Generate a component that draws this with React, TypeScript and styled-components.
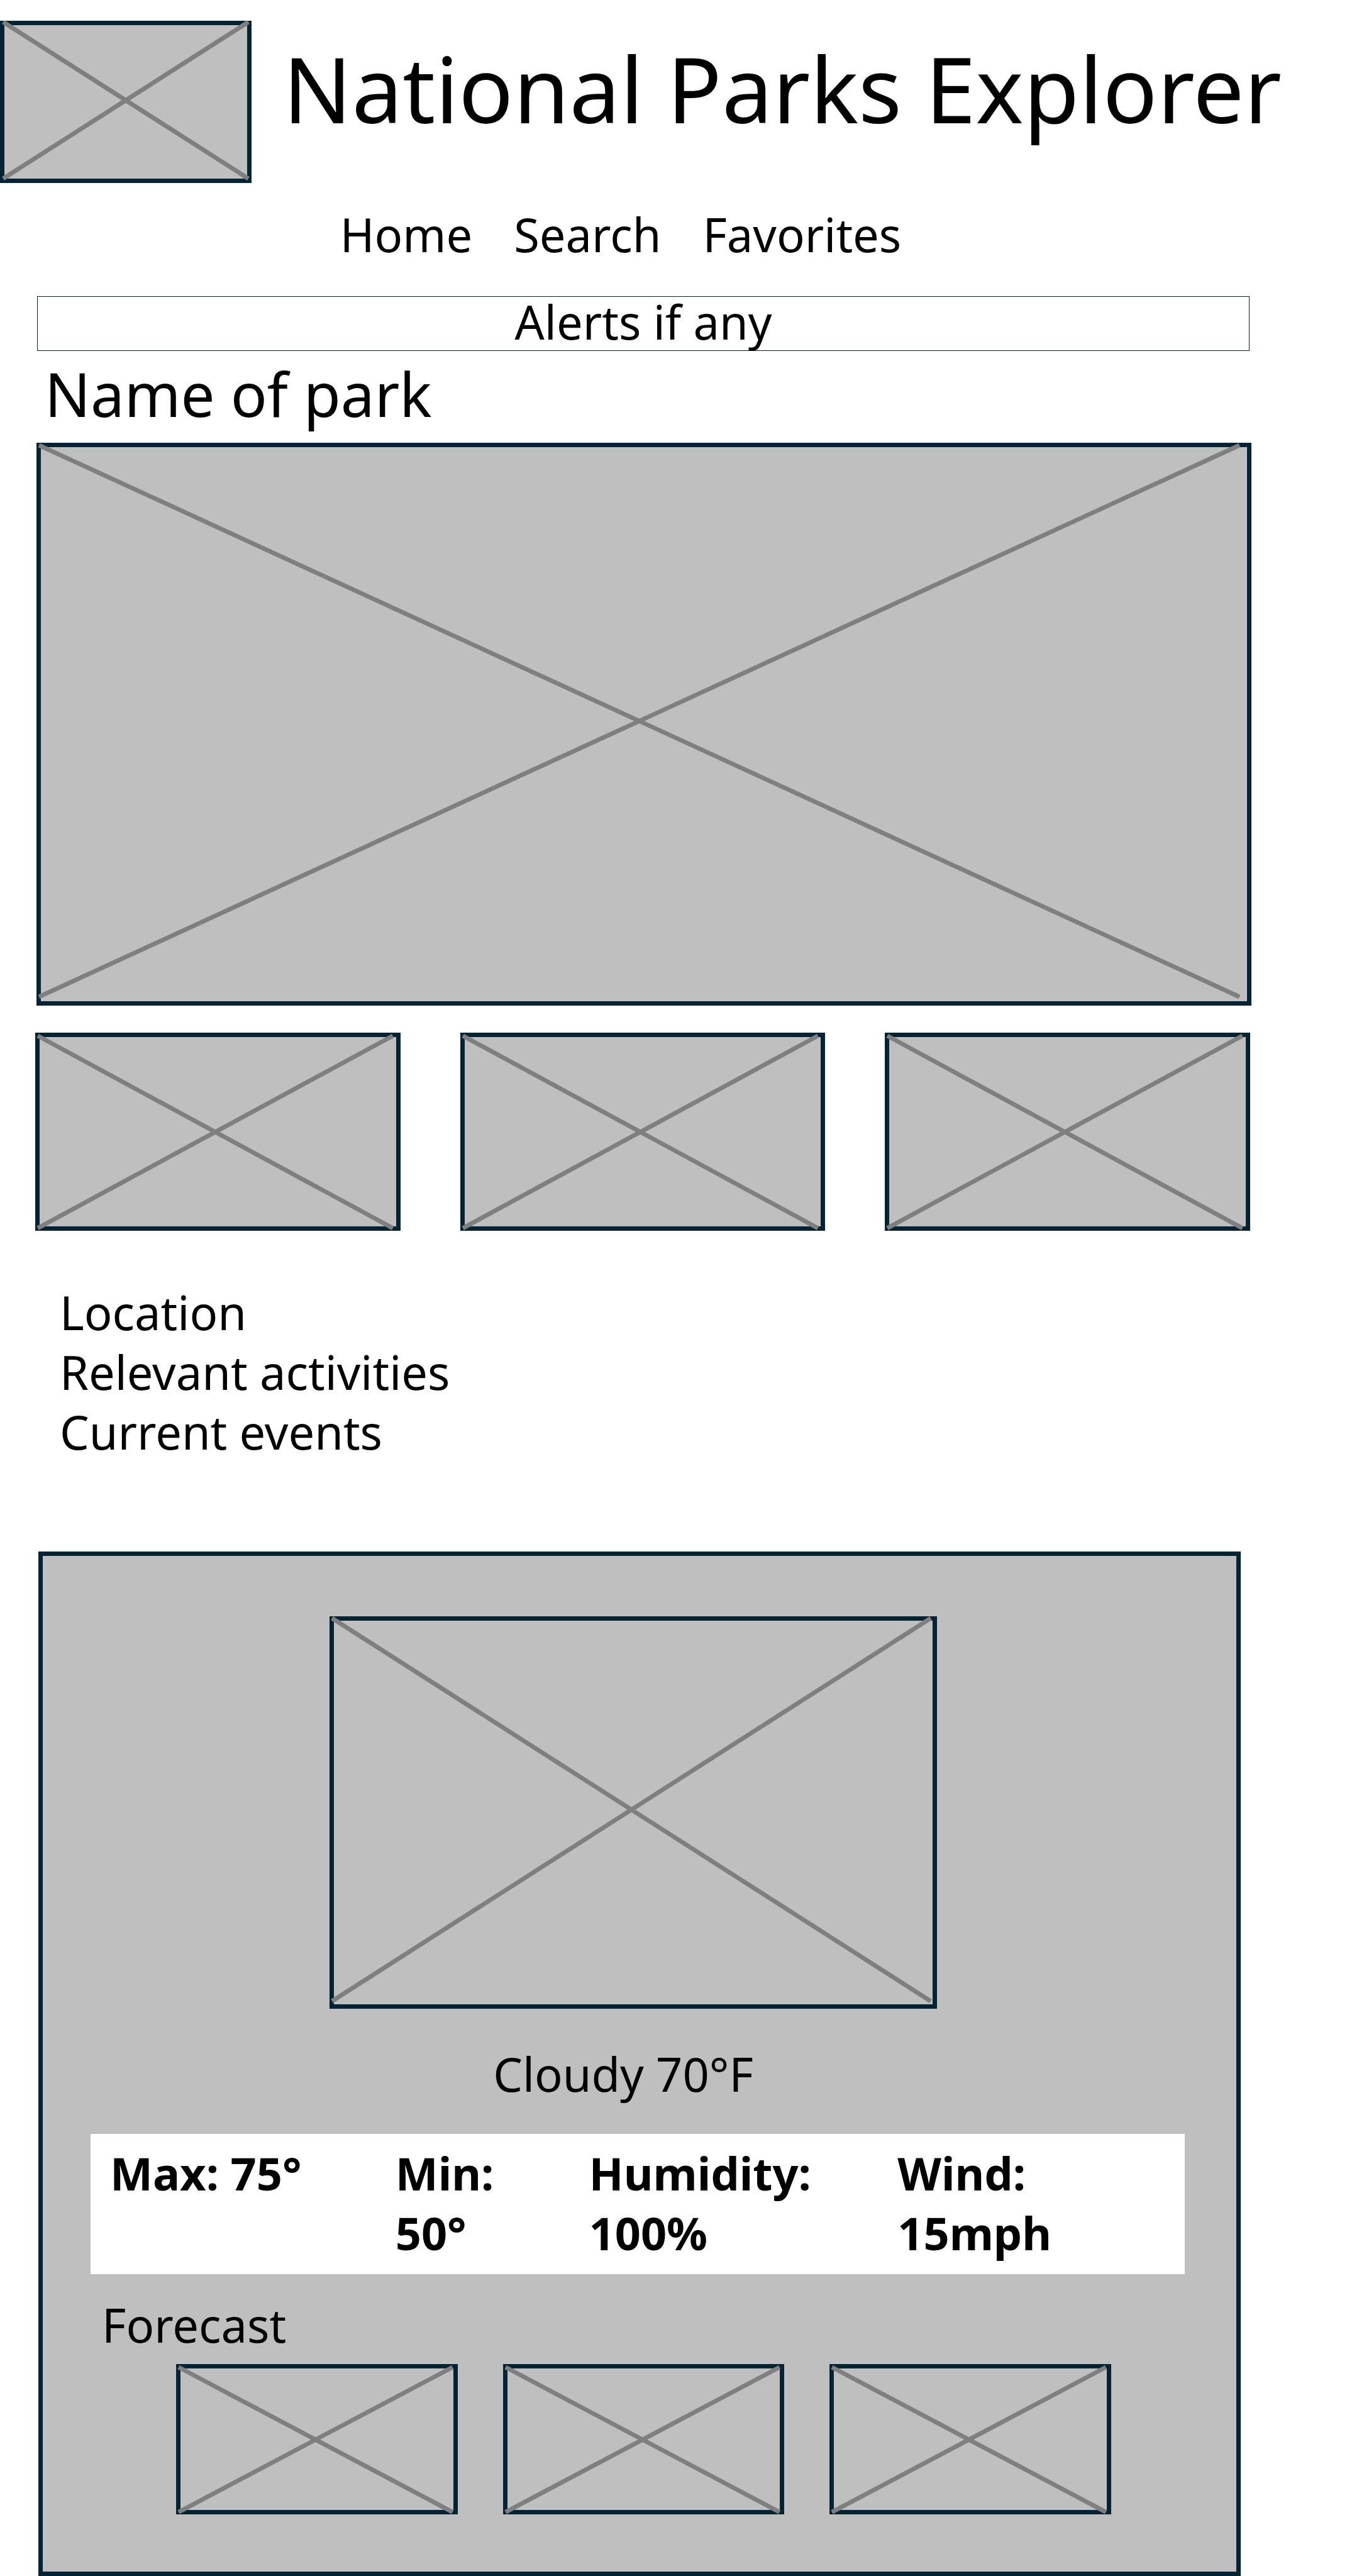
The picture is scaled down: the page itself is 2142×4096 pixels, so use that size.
import React from "react";
import styled, { createGlobalStyle } from "styled-components";

const ink = "#042433";
const fill = "#bfbfbf";
const stroke = "#7f7f7f";

const GlobalStyle = createGlobalStyle`
  *, *::before, *::after { box-sizing: border-box; }
  body {
    margin: 0;
    background: #fff;
    color: #000;
    font-family: "Noto Sans", "Open Sans", sans-serif;
    font-size: 74px;
    line-height: 95px;
  }
`;

/* Image placeholder: the padding is how far the crossing lines stop from each edge. */
const Frame = styled.div<{ $ratio: string; $inset: string }>`
  aspect-ratio: ${(p) => p.$ratio};
  padding: ${(p) => p.$inset};
  min-width: 0;
  background: ${fill};
  box-shadow: inset 0 0 0 7px ${ink};
`;

const Cross = styled.svg`
  display: block;
  width: 100%;
  height: 100%;
  overflow: visible;
  stroke: ${stroke};
  stroke-width: 7px;
`;

type PlaceholderProps = {
  label: string;
  ratio: string;
  inset: string;
  className?: string;
};

function Placeholder({ label, ratio, inset, className }: PlaceholderProps) {
  return (
    <Frame className={className} role="img" aria-label={label} $ratio={ratio} $inset={inset}>
      <Cross aria-hidden="true">
        <line x1="0%" y1="0%" x2="100%" y2="100%" />
        <line x1="0%" y1="100%" x2="100%" y2="0%" />
      </Cross>
    </Frame>
  );
}

const Header = styled.header`
  display: flex;
  align-items: flex-start;
  gap: 50px;
  padding-top: 33px;
`;

const Logo = styled(Placeholder)`
  flex: 0 0 400px;
`;

const Title = styled.h1`
  margin: 21px 0 0;
  font-size: 144px;
  font-weight: 400;
  line-height: 172px;
  white-space: nowrap;
`;

const Main = styled.main`
  padding: 0 152px 0 56px;
`;

const Nav = styled.nav`
  display: flex;
  justify-content: center;
  gap: 66px;
  margin-top: 34px;
  padding-right: 72px;
  line-height: 96px;
`;

const NavLink = styled.a`
  color: inherit;
  text-decoration: none;
`;

const Alert = styled.div`
  margin: 50px 3px 0;
  padding-bottom: 5px;
  border: 1px solid ${ink};
  line-height: 80px;
  text-align: center;
`;

const ParkName = styled.h2`
  margin: 6px 0 16px;
  padding-left: 15px;
  font-size: 96px;
  font-weight: 400;
  line-height: 124px;
`;

const Hero = styled(Placeholder)`
  margin-left: 2px;
`;

const Gallery = styled.div`
  display: grid;
  grid-template-columns: repeat(3, minmax(0, 1fr));
  gap: 95px;
  margin-top: 43px;
  padding-right: 2px;
`;

const Details = styled.ul`
  margin: 82px 0 0;
  padding: 0 0 0 39px;
  list-style: none;
`;

const Weather = styled.section`
  margin: 143px 17px 0 5px;
  padding: 103px 89px 98px 83px;
  background: ${fill};
  box-shadow: inset 0 0 0 7px ${ink};
`;

const WeatherImage = styled(Placeholder)`
  margin: 0 394px 0 380px;
`;

const Conditions = styled.p`
  margin: 56px 0 48px;
  padding-right: 46px;
  text-align: center;
`;

const Stats = styled.ul`
  display: grid;
  grid-template-columns: 454fr 308fr 491fr 457fr;
  margin: 0;
  padding: 15px 0 18px 31px;
  background: #fff;
  font-size: 72px;
  font-weight: 700;
  list-style: none;
`;

const Stat = styled.li`
  min-width: 0;
  padding-right: 40px;
`;

const ForecastTitle = styled.h3`
  margin: 33px 0 15px;
  padding-left: 18px;
  font-size: inherit;
  font-weight: 400;
`;

const Forecast = styled.div`
  display: grid;
  grid-template-columns: repeat(3, minmax(0, 1fr));
  gap: 72px;
  margin: 0 117px 0 136px;
`;

const links = ["Home", "Search", "Favorites"];
const details = ["Location", "Relevant activities", "Current events"];
const stats = ["Max: 75°", "Min: 50°", "Humidity: 100%", "Wind: 15mph"];
const slots = [1, 2, 3];

export default function App() {
  return (
    <>
      <GlobalStyle />
      <Header>
        <Logo label="Logo" ratio="400 / 258" inset="2px 5px 7px 5px" />
        <Title>National Parks Explorer</Title>
      </Header>
      <Main>
        <Nav>
          {links.map((name) => (
            <NavLink key={name} href={`#${name.toLowerCase()}`}>
              {name}
            </NavLink>
          ))}
        </Nav>
        <Alert role="status">Alerts if any</Alert>
        <ParkName>Name of park</ParkName>
        <Hero label="Park" ratio="1932 / 895" inset="4px 19px 14px 4px" />
        <Gallery>
          {slots.map((n) => (
            <Placeholder key={n} label={`Park photo ${n}`} ratio="581 / 315" inset="5px 12px 4px 4px" />
          ))}
        </Gallery>
        <Details>
          {details.map((item) => (
            <li key={item}>{item}</li>
          ))}
        </Details>
        <Weather>
          <WeatherImage label="Current weather" ratio="966 / 624" inset="3px 10px 12px 4px" />
          <Conditions>Cloudy 70°F</Conditions>
          <Stats>
            {stats.map((item) => (
              <Stat key={item}>{item}</Stat>
            ))}
          </Stats>
          <ForecastTitle>Forecast</ForecastTitle>
          <Forecast>
            {slots.map((n) => (
              <Placeholder key={n} label={`Forecast day ${n}`} ratio="447 / 239" inset="5px 8px 4px 4px" />
            ))}
          </Forecast>
        </Weather>
      </Main>
    </>
  );
}
